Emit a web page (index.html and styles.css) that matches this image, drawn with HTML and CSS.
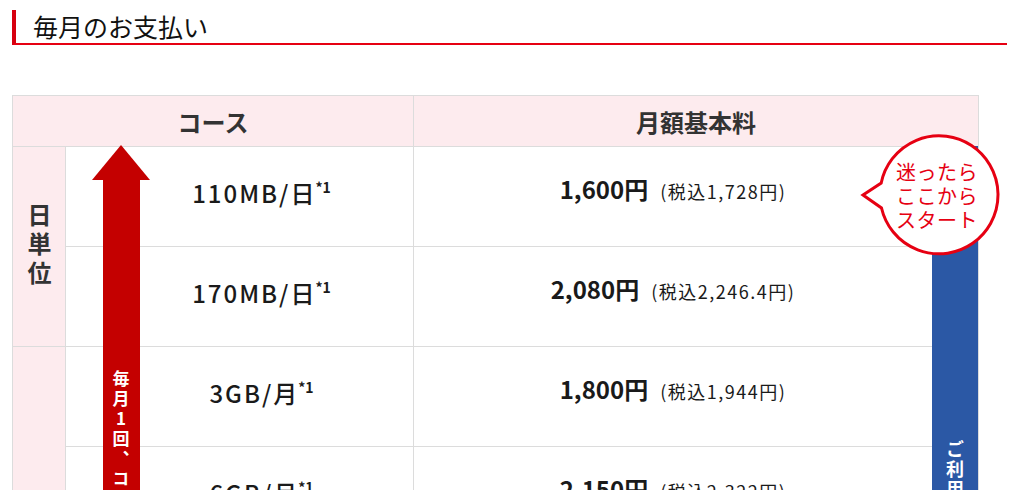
FILE: index.html
```html
<!DOCTYPE html>
<html lang="ja">
<head>
<meta charset="utf-8">
<title>毎月のお支払い</title>
<link rel="stylesheet" href="styles.css">
</head>
<body>
<section class="pay">
  <h2 class="pay-title">毎月のお支払い</h2>
  <div class="plan">
    <table class="plan-table">
      <colgroup>
        <col class="col-unit">
        <col class="col-course">
        <col class="col-fee">
      </colgroup>
      <thead>
        <tr>
          <th class="head-course" colspan="2">コース</th>
          <th class="head-price">月額基本料</th>
        </tr>
      </thead>
      <tbody>
        <tr>
          <th class="unit" rowspan="2"><span class="unit-text">日単位</span></th>
          <td class="course">110MB/日<sup>*1</sup></td>
          <td class="fee"><span class="price">1,600円</span><span class="tax">(税込1,728円)</span></td>
        </tr>
        <tr>
          <td class="course">170MB/日<sup>*1</sup></td>
          <td class="fee"><span class="price">2,080円</span><span class="tax">(税込2,246.4円)</span></td>
        </tr>
        <tr>
          <th class="unit" rowspan="4"><span class="unit-text">月単位</span></th>
          <td class="course">3GB/月<sup>*1</sup></td>
          <td class="fee"><span class="price">1,800円</span><span class="tax">(税込1,944円)</span></td>
        </tr>
        <tr>
          <td class="course">6GB/月<sup>*1</sup></td>
          <td class="fee"><span class="price">2,150円</span><span class="tax">(税込2,322円)</span></td>
        </tr>
        <tr>
          <td class="course">10GB/月<sup>*1</sup></td>
          <td class="fee"><span class="price">3,220円</span><span class="tax">(税込3,477.6円)</span></td>
        </tr>
        <tr>
          <td class="course">20GB/月<sup>*1</sup></td>
          <td class="fee"><span class="price">4,900円</span><span class="tax">(税込5,292円)</span></td>
        </tr>
      </tbody>
    </table>

    <div class="arrow-up">
      <svg class="arrow-head" width="58" height="35" viewBox="0 0 58 35" aria-hidden="true">
        <polygon points="29,0 58,35 0,35" fill="#c40000"/>
      </svg>
      <div class="arrow-shaft"><span class="arrow-text">毎月1回、コース変更可能</span></div>
    </div>

    <div class="side-bar"><span class="side-text">ご利用状況に合わせて</span></div>

    <div class="bubble">
      <svg class="bubble-shape" width="142" height="124" viewBox="0 0 142 124" aria-hidden="true">
        <path d="M3 61 L21.2 49 A59 59 0 1 1 21.5 74 Z" fill="#fff" stroke="#e60012" stroke-width="3" stroke-linejoin="miter"/>
      </svg>
      <p class="bubble-text">迷ったら<br>ここから<br>スタート</p>
    </div>
  </div>
</section>
</body>
</html>
```

FILE: styles.css
```css
* { box-sizing: border-box; }

html, body {
  margin: 0;
  padding: 0;
  background: #fff;
}

body {
  padding: 10px 12px 0;
  font-family: "Noto Sans CJK JP", "Noto Sans", sans-serif;
  color: #222;
  overflow: hidden;
}

.pay-title {
  margin: 0;
  height: 35px;
  padding-left: 17px;
  border-left: 4px solid #d7000f;
  border-bottom: 2px solid #e60012;
  font-size: 25px;
  font-weight: 400;
  line-height: 32px;
  color: #111;
}

.plan {
  position: relative;
  width: 966px;
  margin-top: 50px;
}

.plan-table {
  width: 966px;
  border-collapse: collapse;
  table-layout: fixed;
}

.col-unit { width: 53px; }
.col-course { width: 348px; }
.col-fee { width: 565px; }

.plan-table th,
.plan-table td {
  border: 1px solid #dcdcdc;
  padding: 0;
  text-align: center;
  vertical-align: middle;
}

.plan-table thead th {
  height: 51px;
  background: #fdebee;
  font-size: 24px;
  font-weight: 700;
  color: #333;
}

.unit {
  background: #fdebee;
  font-size: 24px;
  font-weight: 700;
  color: #333;
}

.unit-text {
  display: inline-block;
  writing-mode: vertical-rl;
  text-orientation: upright;
  line-height: 1;
  letter-spacing: 5px;
  padding-top: 6px;
}

.plan-table tbody td {
  height: 100px;
}

.course {
  padding: 0 0 8px 44px !important;
  font-size: 24px;
  font-weight: 500;
  letter-spacing: 2px;
  color: #1a1a1a;
}

.course sup {
  font-size: 14px;
  font-weight: 700;
  line-height: 0;
  vertical-align: 10px;
  letter-spacing: 0;
  margin-left: -1px;
}

.fee {
  padding: 0 46px 16px 0 !important;
  color: #1a1a1a;
}

.price {
  font-size: 24px;
  font-weight: 700;
}

.tax {
  margin-left: 12px;
  font-size: 18px;
  font-weight: 400;
  letter-spacing: 1.5px;
}

.arrow-up {
  position: absolute;
  left: 80px;
  top: 50px;
  width: 58px;
  display: flex;
  flex-direction: column;
  align-items: center;
}

.arrow-head { display: block; }

.arrow-shaft {
  width: 37px;
  height: 480px;
  background: #c40000;
  display: flex;
  justify-content: center;
  padding-top: 190px;
  overflow: hidden;
}

.arrow-text {
  writing-mode: vertical-rl;
  text-orientation: upright;
  white-space: nowrap;
  color: #fff;
  font-size: 17px;
  font-weight: 700;
  line-height: 1;
  letter-spacing: 3px;
}

.side-bar {
  position: absolute;
  left: 920px;
  top: 51px;
  width: 46px;
  height: 500px;
  background: #2b58a5;
  display: flex;
  justify-content: center;
  padding-top: 294px;
  overflow: hidden;
}

.side-text {
  writing-mode: vertical-rl;
  text-orientation: upright;
  white-space: nowrap;
  color: #fff;
  font-size: 18px;
  font-weight: 700;
  line-height: 1;
  letter-spacing: 2px;
}

.bubble {
  position: absolute;
  left: 848px;
  top: 39px;
  width: 142px;
  height: 124px;
}

.bubble-shape {
  position: absolute;
  left: 0;
  top: 0;
}

.bubble-text {
  position: relative;
  margin: 0;
  padding: 26px 0 0 36px;
  font-size: 20px;
  line-height: 24px;
  letter-spacing: 0.5px;
  color: #e60012;
  font-weight: 400;
}
```
